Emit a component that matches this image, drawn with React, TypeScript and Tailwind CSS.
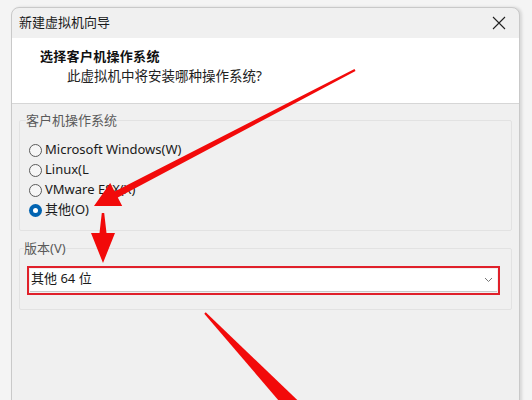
import React from "react";

const font = { fontFamily: '"Noto Sans", "Noto Sans CJK SC", sans-serif' };

const Radio = ({ label, checked }: { label: string; checked?: boolean }) => (
  <label className="flex items-center h-[20px] gap-[3px] text-[13px] text-[#1a1a1a]">
    {checked ? (
      <span className="w-[13px] h-[13px] rounded-full bg-[#0063b1] flex items-center justify-center">
        <span className="w-[5px] h-[5px] rounded-full bg-white" />
      </span>
    ) : (
      <span className="w-[13px] h-[13px] rounded-full border border-[#5a5a5a] bg-[#f6f6f6]" />
    )}
    <span>{label}</span>
  </label>
);

const Arrows = () => (
  <svg className="absolute inset-0 pointer-events-none" width="532" height="400" viewBox="0 0 532 400">
    <polygon
      fill="#f20a0a"
      points="355.5,70.9 117.8,197.6 122.2,206 94,206 110.2,183 114.6,191.4 354.5,69.1"
    />
    <polygon
      fill="#f20a0a"
      points="101.8,213 104.2,213 106.5,233 115,233 103,263 91,233 99.5,233"
    />
    <polygon fill="#f20a0a" points="205.7,312.3 302,404.5 291,415 204.3,313.7" />
  </svg>
);

export default function App() {
  return (
    <div className="relative w-[532px] h-[400px] overflow-hidden bg-[#f4f4f4]" style={font}>
      <div className="pt-[7px] pl-[11px]">
        <div className="w-[509px] h-[420px] bg-[#f0f0f0] rounded-t-[8px] border border-[#c9c9c9] shadow-[2px_0_3px_rgba(0,0,0,0.12)] overflow-hidden">
          {/* title bar */}
          <div className="h-[30px] flex items-center justify-between pl-[7px] pr-[12px] text-[13px] text-[#1a1a1a]">
            <span>新建虚拟机向导</span>
            <svg width="14" height="14" viewBox="0 0 14 14" className="mr-[1px]">
              <path d="M1 1 L13 13 M13 1 L1 13" stroke="#222" strokeWidth="1.1" />
            </svg>
          </div>

          {/* header */}
          <div className="h-[66px] bg-white border-b border-[#d6d6d6] pt-[8px]">
            <div className="pl-[28px] text-[13px] font-bold text-[#111] leading-[20px] tracking-[0.3px]">选择客户机操作系统</div>
            <div className="pl-[55px] text-[13.5px] text-[#222] leading-[20px]">此虚拟机中将安装哪种操作系统?</div>
          </div>

          {/* content */}
          <div className="px-[7px] pt-[8px]">
            <fieldset className="border border-[#e2e2e2] rounded-[2px] h-[119px] px-[9px]">
              <legend className="ml-[-3px] px-0 text-[13px] text-[#5a5a5a] leading-[16px]">客户机操作系统</legend>
              <div className="flex flex-col pt-[12px]">
                <Radio label="Microsoft Windows(W)" />
                <Radio label="Linux(L" />
                <Radio label="VMware ESX(X)" />
                <Radio label="其他(O)" checked />
              </div>
            </fieldset>

            <fieldset className="border border-[#e2e2e2] rounded-[2px] h-[70px] mt-[9px] pl-[7px] pr-[11px]">
              <legend className="ml-[-3px] px-0 text-[13px] text-[#5a5a5a] leading-[16px]">版本(V)</legend>
              <div className="mt-[10px] border-2 border-[#e0202a] p-[1px]">
                <div className="h-[23px] bg-white border-b border-[#c8c8c8] flex items-center justify-between pl-[1px] pr-[4px] text-[13px] text-[#1a1a1a]">
                  <span className="-mt-[3px]">其他 64 位</span>
                  <svg width="9" height="6" viewBox="0 0 9 6">
                    <path d="M1 1 L4.5 4.5 L8 1" stroke="#777" strokeWidth="1" fill="none" />
                  </svg>
                </div>
              </div>
            </fieldset>
          </div>
        </div>
      </div>
      <Arrows />
    </div>
  );
}
